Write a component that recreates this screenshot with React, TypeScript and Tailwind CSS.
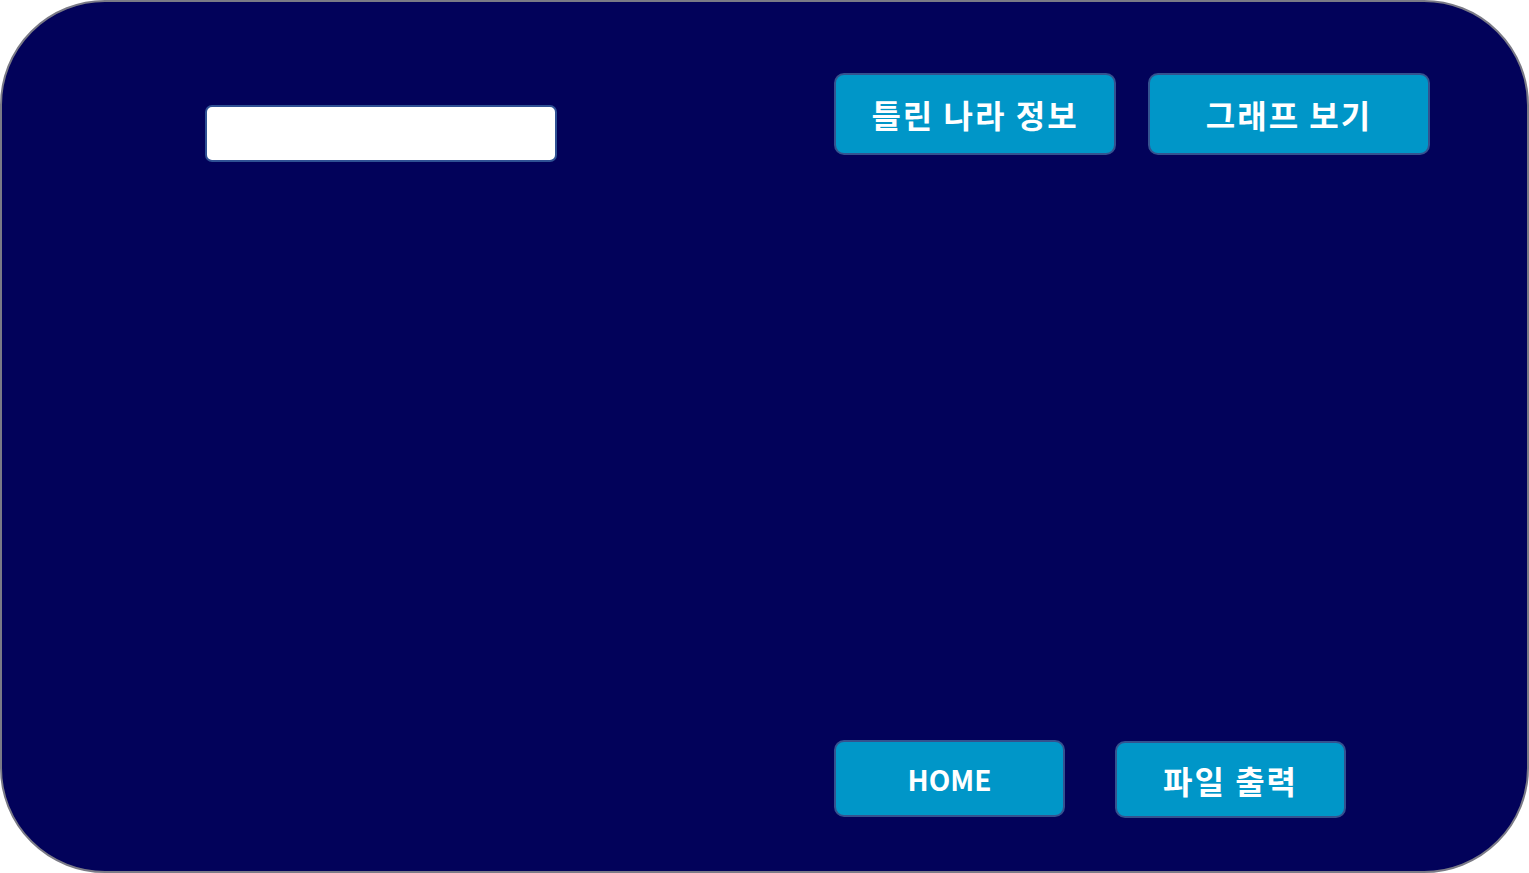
import React from "react";

const font = { fontFamily: '"Noto Sans CJK KR", "Noto Sans", sans-serif' };

function Btn({ label, w, h, extra = "", text = "text-[32px] tracking-[2px]" }: { label: string; w: string; h: string; extra?: string; text?: string }) {
  return (
    <button
      className={`${w} ${h} ${extra} ${text} shrink-0 rounded-[10px] border-2 border-solid border-[#34528f] bg-[#0096c8] text-white font-bold leading-none flex items-center justify-center`}
      style={font}
    >
      {label}
    </button>
  );
}

export default function App() {
  return (
    <div className="w-[1529px] h-[873px] bg-white" style={font}>
      <div className="w-full h-full rounded-[105px] border-2 border-solid border-[#7a7a86] bg-[#02025a] flex flex-col">
        <div className="flex items-start pt-[71px] pl-[203px]">
          <div className="mt-[32px] w-[352px] h-[57px] rounded-[7px] border-2 border-solid border-[#2f5194] bg-white shrink-0" />
          <Btn label="틀린 나라 정보" w="w-[282px]" h="h-[82px]" extra="ml-[277px]" />
          <Btn label="그래프 보기" w="w-[282px]" h="h-[82px]" extra="ml-[32px]" />
        </div>
        <div className="mt-auto flex items-start pl-[832px] pb-[53px]">
          <Btn label="HOME" w="w-[231px]" h="h-[77px]" text="text-[28px]" />
          <Btn label="파일 출력" w="w-[231px]" h="h-[77px]" extra="ml-[50px] mt-[1px]" />
        </div>
      </div>
    </div>
  );
}
